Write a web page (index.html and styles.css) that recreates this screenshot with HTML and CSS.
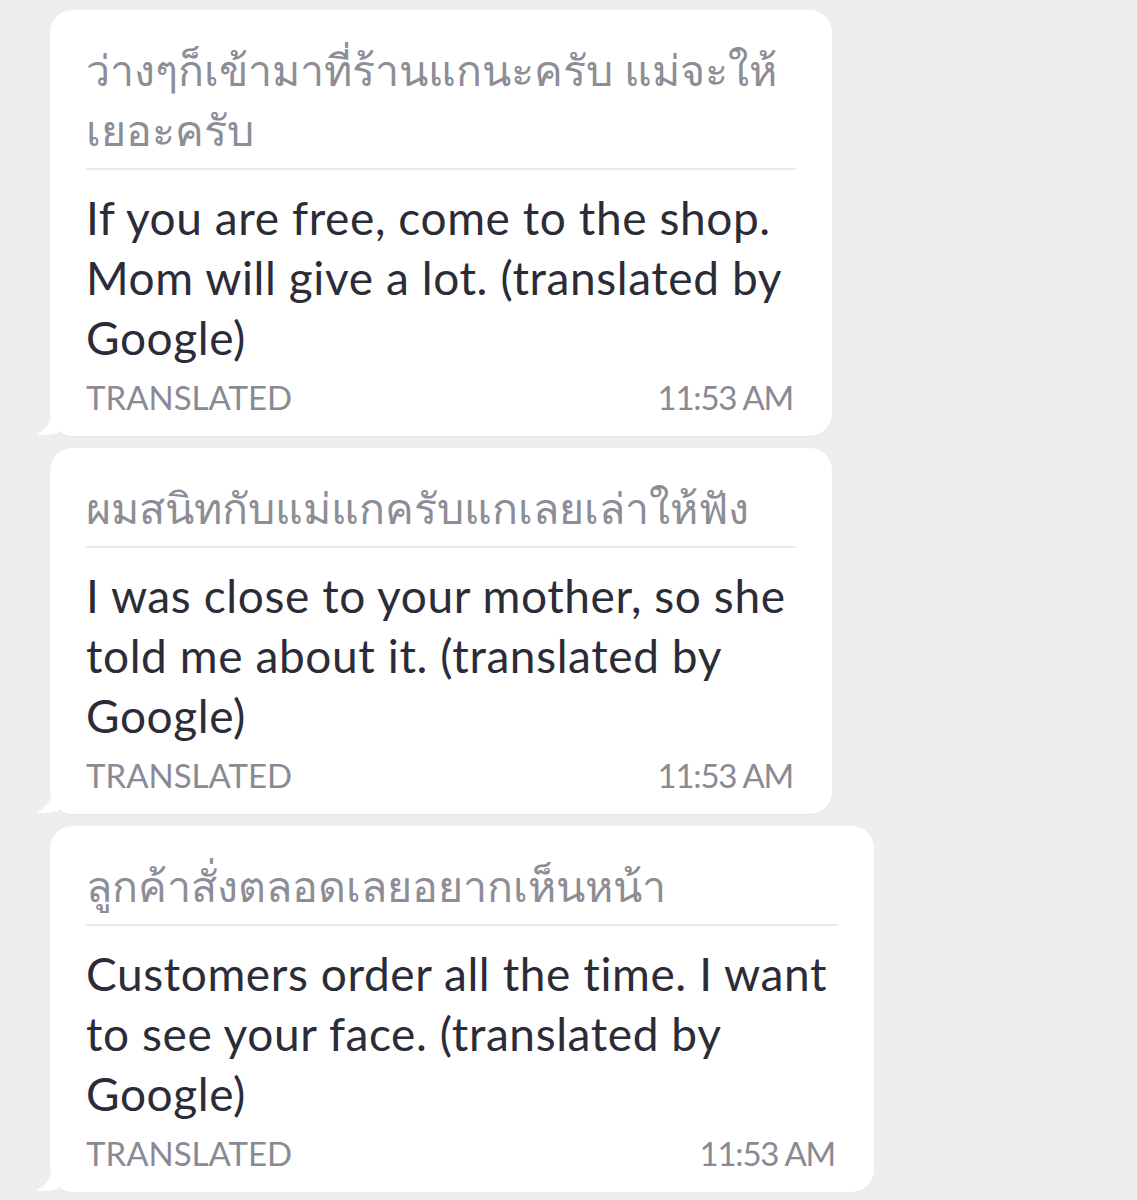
FILE: index.html
```
<!DOCTYPE html>
<html lang="en">
<head>
    <meta charset="UTF-8">
    <title>Translated messages</title>
    <link rel="stylesheet" href="styles.css">
</head>
<body>
    <div class="chat">
        <div class="bubble bubble-narrow">
            <div class="original">ว่างๆก็เข้ามาที่ร้านแกนะครับ แม่จะให้เยอะครับ</div>
            <div class="translation">If you are free, come to the shop. Mom will give a lot. (translated by Google)</div>
            <div class="meta">
                <span>TRANSLATED</span>
                <span class="time">11:53 AM</span>
            </div>
            <svg class="tail" width="22" height="26" viewBox="0 0 22 26"><path d="M16 0 C16 12 11 20 0 24 C8 26 15 25 22 23 L22 0 Z" fill="#fff"/></svg>
        </div>
        <div class="bubble bubble-narrow">
            <div class="original">ผมสนิทกับแม่แกครับแกเลยเล่าให้ฟัง</div>
            <div class="translation">I was close to your mother, so she told me about it. (translated by Google)</div>
            <div class="meta">
                <span>TRANSLATED</span>
                <span class="time">11:53 AM</span>
            </div>
            <svg class="tail" width="22" height="26" viewBox="0 0 22 26"><path d="M16 0 C16 12 11 20 0 24 C8 26 15 25 22 23 L22 0 Z" fill="#fff"/></svg>
        </div>
        <div class="bubble bubble-wide">
            <div class="original">ลูกค้าสั่งตลอดเลยอยากเห็นหน้า</div>
            <div class="translation">Customers order all the time. I want to see your face. (translated by Google)</div>
            <div class="meta">
                <span>TRANSLATED</span>
                <span class="time">11:53 AM</span>
            </div>
            <svg class="tail" width="22" height="26" viewBox="0 0 22 26"><path d="M16 0 C16 12 11 20 0 24 C8 26 15 25 22 23 L22 0 Z" fill="#fff"/></svg>
        </div>
    </div>
</body>
</html>
```

FILE: styles.css
```
body {
    margin: 0;
    background: #eeeef0;
    font-family: Lato, "Noto Sans", sans-serif;
}
.chat {
    display: flex;
    flex-direction: column;
    align-items: flex-start;
    gap: 12px;
    padding: 10px 0 0 50px;
}
.bubble {
    position: relative;
    box-sizing: border-box;
    background: #fff;
    border-radius: 22px;
    padding: 30px 36px 20px;
    box-shadow: 0 1px 2px rgba(0,0,0,0.04);
}
.bubble-narrow { width: 782px; }
.bubble-wide { width: 824px; }
.original {
    font-size: 43px;
    line-height: 60px;
    color: #8d8d96;
    padding-bottom: 8px;
    border-bottom: 2px solid #ebebef;
}
.translation {
    margin-top: 18px;
    font-size: 46px;
    line-height: 60px;
    letter-spacing: 0.6px;
    color: #2c2c38;
}
.meta {
    display: flex;
    justify-content: space-between;
    font-size: 33px;
    line-height: 38px;
    color: #8a8a94;
    margin-top: 10px;
    padding-right: 3px;
}
.time { letter-spacing: -1.2px; }
.tail {
    position: absolute;
    left: -14px;
    bottom: 0;
}
```
